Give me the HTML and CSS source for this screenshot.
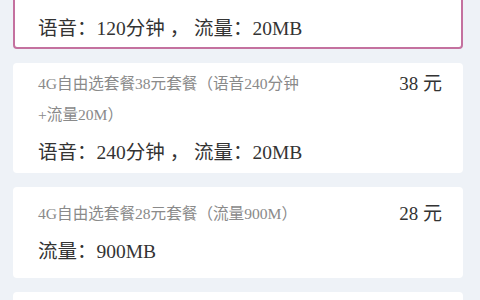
FILE: index.html
```html
<!DOCTYPE html>
<html lang="zh-CN">
<head>
<meta charset="utf-8">
<title>套餐</title>
<link rel="stylesheet" href="styles.css">
</head>
<body>
<div class="list">
  <div class="card selected">
    <div class="head">
      <div class="title">4G自由选套餐18元套餐（语音120分钟+流量20M）</div>
      <div class="price">18 元</div>
    </div>
    <div class="main">语音：120分钟 ， 流量：20MB</div>
  </div>
  <div class="card">
    <div class="head">
      <div class="title">4G自由选套餐38元套餐（语音240分钟+流量20M）</div>
      <div class="price">38 元</div>
    </div>
    <div class="main">语音：240分钟 ， 流量：20MB</div>
  </div>
  <div class="card">
    <div class="head">
      <div class="title">4G自由选套餐28元套餐（流量900M）</div>
      <div class="price">28 元</div>
    </div>
    <div class="main">流量：900MB</div>
  </div>
  <div class="card">
    <div class="head">
      <div class="title">4G自由选套餐58元套餐（流量2G）</div>
      <div class="price">58 元</div>
    </div>
    <div class="main">流量：2GB</div>
  </div>
</div>
</body>
</html>
```

FILE: styles.css
```css
body {
  margin: 0;
  background: #eef2f7;
  font-family: "Liberation Serif", "Noto Sans CJK SC", serif;
}

.list {
  display: flex;
  flex-direction: column;
  gap: 14px;
  margin: -61px 17px 0 13px;
}

.card {
  background: #ffffff;
  border-radius: 4px;
  min-height: 91px;
  box-sizing: border-box;
  padding: 5px 21px 5px 25px;
  display: flex;
  flex-direction: column;
  justify-content: center;
}

.card.selected {
  border: 2px solid #c4719f;
  padding: 3px 19px 3px 23px;
}

.head {
  display: flex;
  justify-content: space-between;
  align-items: flex-start;
}

.title {
  width: 268px;
  font-size: 15.6px;
  line-height: 31px;
  color: #8a8a8a;
}

.price {
  font-size: 19px;
  line-height: 31px;
  color: #333333;
  white-space: nowrap;
}

.main {
  margin-top: 8px;
  font-size: 19.5px;
  line-height: 30px;
  color: #333333;
}
```
